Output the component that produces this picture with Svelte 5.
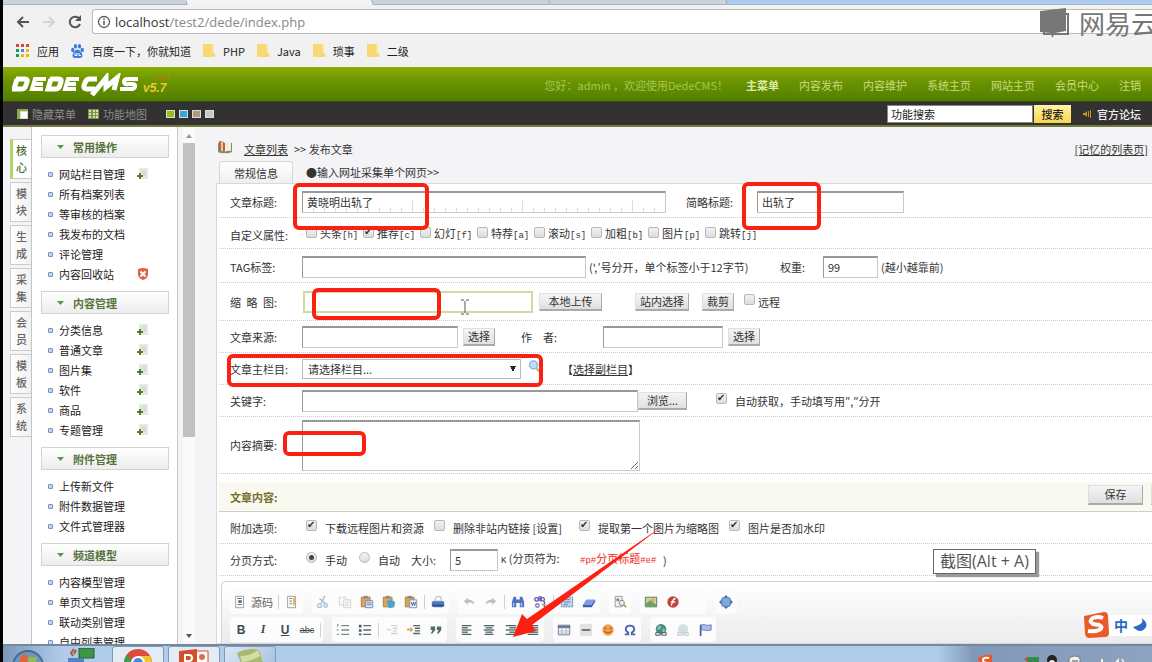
<script>
  const bookmarks = ['PHP', 'Java', '琐事', '二级'];
  const nav = ['主菜单', '内容发布', '内容维护', '系统主页', '网站主页', '会员中心', '注销'];
  const modules = ['核心', '模块', '生成', '采集', '会员', '模板', '系统'];
  const menu = [
    { title: '常用操作', items: [['网站栏目管理', 'add'], ['所有档案列表'], ['等审核的档案'], ['我发布的文档'], ['评论管理'], ['内容回收站', 'del']] },
    { title: '内容管理', items: [['分类信息', 'add'], ['普通文章', 'add'], ['图片集', 'add'], ['软件', 'add'], ['商品', 'add'], ['专题管理', 'add']] },
    { title: '附件管理', items: [['上传新文件'], ['附件数据管理'], ['文件式管理器']] },
    { title: '频道模型', items: [['内容模型管理'], ['单页文档管理'], ['联动类别管理'], ['自由列表管理']] }
  ];
  const flags = [['头条', 'h', false], ['推荐', 'c', true], ['幻灯', 'f', false], ['特荐', 'a', false], ['滚动', 's', false], ['加粗', 'b', false], ['图片', 'p', false], ['跳转', 'j', false]];

  const doc = '<path d="M3 1.500h9v13H3z" fill="#fff" stroke="#8d989c"/>';
  const clip = '<path d="M1.500 2.500h10v11h-10z" fill="#dda552" stroke="#a8763a"/><path d="M4 1h5v3H4z" fill="#8b8b8b"/>';
  const lines = (a) => a.map(([x, w], i) => `<path d="M${x} ${3 + i * 2.5}h${w}" stroke="#4d6468" stroke-width="1.500"/>`).join('');
  const icons = {
    source: doc + '<path d="M5 4h5M5 11h5" stroke="#555"/><path d="M6 6h4v3H6z" fill="#3f6b74"/>',
    preview: doc + '<path d="M5 4h3M5 7h3M5 10h3" stroke="#667"/><path d="M9 3h3v9H9z" fill="#e0b868"/>',
    cut: '<path d="M10 1L6 10M4 4l7 6" stroke="#a9bccb" stroke-width="1.500" fill="none"/><circle cx="4" cy="12" r="2.200" fill="none" stroke="#a5c1e0" stroke-width="1.500"/><circle cx="11" cy="12" r="2" fill="none" stroke="#a5c1e0" stroke-width="1.500"/>',
    copy: '<g fill="#fafafa" stroke="#ccd0d2"><path d="M1.500 2.500h7v9h-7z"/><path d="M6.500 5.500h8v9h-8z"/></g><path d="M8 8h5M8 10h5M8 12h5" stroke="#d5d8da"/>',
    paste: clip + '<path d="M6.500 6.500h8v8h-8z" fill="#d7e1fb" stroke="#6d82bd"/><path d="M8 9h5M8 11h5" stroke="#6b7fc0"/>',
    pasteText: clip + '<path d="M5 7l5-2 5 3-1 6-6 1z" fill="#4fa3cc"/>',
    pasteWord: clip + '<path d="M6.500 5.500h8v9h-8z" fill="#eef2fb" stroke="#7d8db5"/><path d="M8 8l1.500 4L11 8l1 4 1.500-4" stroke="#3f5790" fill="none"/>',
    print: '<path d="M4 7l2-5h5l1 5z" fill="#fff" stroke="#9aa7bb"/><path d="M1 7h14v5l-2 2H3l-2-2z" fill="#5078b8"/><path d="M1 11h14v2H1z" fill="#2d4f8d"/>',
    undo: '<path d="M2 7l5-4v2.500c5 0 7 2 7 6-2-3-4-3-7-3V11z" fill="#bcbfc2"/>',
    redo: '<path d="M14 7L9 3v2.500c-5 0-7 2-7 6 2-3 4-3 7-3V11z" fill="#bcbfc2"/>',
    find: '<path d="M3 2h3v3h4V2h3l2 6v6h-5V9H6v5H1V8z" fill="#5273c4"/><path d="M3 9v4M12 9v4" stroke="#b3c4ef" stroke-width="1.500"/>',
    replace: '<circle cx="4" cy="5" r="2" fill="none" stroke="#5a54b5" stroke-width="1.500"/><path d="M7 1v6M9 1v6M13 7v7" stroke="#5a54b5" stroke-width="1.500"/><circle cx="11" cy="5" r="2" fill="none" stroke="#5a54b5" stroke-width="1.500"/><circle cx="5" cy="12" r="2" fill="none" stroke="#7d78c8" stroke-width="1.500"/><path d="M10 11h5" stroke="#d4a060" stroke-width="2"/>',
    selectAll: '<path d="M1.500 2.500h13v11h-13z" fill="#bcd6ef" stroke="#4b7596" stroke-dasharray="2 1"/><path d="M4 5h7M4 8h8M4 11h5" stroke="#597d9c"/>',
    eraser: '<path d="M5 5h10l-4 6H1z" fill="#7e9be8"/><path d="M1 11h10l4-6v3l-4 6H1z" fill="#3e5cae"/>',
    find2: '<path d="M2.500 1.500h8v12h-8z" fill="#f2f2f0" stroke="#8b9494"/><path d="M4 4h3v3H4z" fill="#6f8784"/><circle cx="10" cy="9" r="3" fill="#e6eef0" stroke="#727d7f"/><path d="M12 11l3 3" stroke="#c79144" stroke-width="2"/>',
    image: '<path d="M1.500 2.500h13v11h-13z" fill="#c6d598" stroke="#5d6b55"/><path d="M2 10l5-4 7 5v2H2z" fill="#6f9f68"/><circle cx="10" cy="6" r="2" fill="#e2a850"/>',
    flash: '<circle cx="8" cy="8" r="6.500" fill="#c1443a"/><path d="M11 4c-4 0-3 4-5 8M5.500 8h5" stroke="#fff" stroke-width="1.500" fill="none"/>',
    maximize: '<path d="M8 0l3 3H5zM8 16l3-3H5zM0 8l3-3v6zM16 8l-3-3v6z" fill="#5c7386"/><rect x="3" y="3" width="10" height="10" rx="2" fill="#79a8e4" stroke="#4672ae"/>',
    ol: '<path d="M2 1v3M1 8h2M1 13h2" stroke="#4d5b60"/><path d="M6 3h9M6 8h9M6 13h9" stroke="#7c898d" stroke-width="1.500"/>',
    ul: '<path d="M1 2h3v3H1zM1 7h3v3H1zM1 12h3v2H1z" fill="#41636a"/><path d="M6 3h9M6 8h9M6 13h9" stroke="#5c6c70" stroke-width="1.500"/>',
    outdent: '<path d="M7 3h7M9 6h5M9 9h5M7 12h7M2 7.500h5" stroke="#cfd2d3" stroke-width="1.500"/>',
    indent: '<path d="M7 3h8M9 6h6M9 9h6M7 12h8" stroke="#57686b" stroke-width="1.500"/><path d="M0 7.500h4" stroke="#d99c49" stroke-width="2"/><path d="M4 4l3 3.500L4 11z" fill="#d99c49"/>',
    quote: '<path d="M2 4h5v4l-3 4H2l2-4H2zM9 4h5v4l-3 4H9l2-4H9z" fill="#52686c"/>',
    left: lines([[2, 11], [2, 7], [2, 11], [2, 7], [2, 11]]),
    center: lines([[2, 12], [4, 8], [2, 12], [4, 8], [3, 10]]),
    right: lines([[2, 12], [6, 8], [2, 12], [6, 8], [2, 12]]),
    justify: lines([[2, 12], [2, 12], [2, 12], [2, 12], [2, 12]]),
    table: '<path d="M1.500 2.500h13v11h-13z" fill="#fff" stroke="#5a6880"/><path d="M1 3h14v3H1z" fill="#6677a0"/><path d="M1 9h14M1 11.500h14M5.500 5v8M10.500 5v8" stroke="#a9b3c6"/>',
    hr: '<path d="M1 1h14v14H1z" fill="#e2e2e2"/><path d="M3 8h10" stroke="#444" stroke-width="1.500"/>',
    smile: '<circle cx="8" cy="8" r="6.500" fill="#f0a04a"/><path d="M4 6h2M10 6h2M4 9c1 3 7 3 8 0" stroke="#b05a20" stroke-width="1.500" fill="none"/>',
    omega: '<path d="M2 13h4v-2C1 8 3 3 8 3s7 5 2 8v2h4" fill="none" stroke="#4560b4" stroke-width="2"/>',
    link: '<circle cx="8" cy="7" r="6" fill="#3f8793"/><path d="M5 3l4 1-2 3-4 1zM10 6l3 1-2 4-2-2z" fill="#8fc487"/><path d="M2 11h5v3H2zM9 11h5v3H9z" fill="#e5e8ec" stroke="#43505c"/>',
    unlink: '<circle cx="8" cy="7" r="6" fill="#d3e1e2"/><path d="M2 11h5v3H2zM9 11h5v3H9z" fill="#f2f3f4" stroke="#b9c2c8"/>',
    flag: '<path d="M3 2v13" stroke="#48659f" stroke-width="2"/><path d="M4 2c4-1 6 2 11 0v6c-5 2-7-1-11 0z" fill="#a9c0ee" stroke="#5a76b8"/>'
  };
  const toolRows = [
    [
      ['source', '|', 'preview'],
      ['cut', 'copy', 'paste', 'pasteText', 'pasteWord', '|', 'print'],
      ['undo', 'redo', '|', 'find', 'replace', '|', 'selectAll', 'eraser'],
      ['find2'],
      ['image', 'flash', ''],
      ['maximize']
    ],
    [
      ['B', 'I', 'U', 'abc', '|'],
      ['ol', 'ul', '|', 'outdent', 'indent', 'quote'],
      ['left', 'center', 'right', 'justify'],
      ['table', 'hr', 'smile', 'omega'],
      ['link', 'unlink', 'flag']
    ]
  ];
</script>

<div class="screen">
  <div class="tabstrip"><i class="tab one"></i><i class="tab active"></i><i class="tab two"></i><i class="tab three"></i></div>

  <div class="toolbar">
    <button class="plain" aria-label="后退"><svg width="14" height="12" viewBox="0 0 14 12"><path d="M13 6H2M7 1L2 6l5 5" fill="none" stroke="#555" stroke-width="2" /></svg></button>
    <button class="plain" aria-label="前进"><svg width="14" height="12" viewBox="0 0 14 12"><path d="M1 6h11M7 1l5 5-5 5" fill="none" stroke="#d3d3d3" stroke-width="2" /></svg></button>
    <button class="plain" aria-label="刷新"><svg width="14" height="14" viewBox="0 0 14 14"><path d="M11.500 4A5.300 5.300 0 1 0 12 9" fill="none" stroke="#555" stroke-width="2" /><path d="M13 0v6H7z" fill="#555" /></svg></button>
    <div class="address">
      <svg width="14" height="14" viewBox="0 0 14 14"><circle cx="7" cy="7" r="5.500" fill="none" stroke="#555" stroke-width="1.300" /><path d="M7 6v4M7 3.500v1.500" stroke="#555" stroke-width="1.500" /></svg>
      <span><b>localhost</b>/test2/dede/index.php</span>
    </div>
  </div>

  <nav class="bookmarks">
    <a href="#apps"><svg width="13" height="13" viewBox="0 0 13 13"><g fill="#db4437"><path d="M0 0h3v3H0zM5 0h3v3H5zM10 0h3v3h-3z" /></g><path d="M0 5h3v3H0z" fill="#0f9d58" /><path d="M5 5h3v3H5z" fill="#4285f4" /><path d="M10 5h3v3h-3zM5 10h3v3H5zM10 10h3v3h-3z" fill="#f4b400" /><path d="M0 10h3v3H0z" fill="#0f9d58" /></svg>应用</a>
    <a href="#baidu"><svg width="13" height="14" viewBox="0 0 13 14"><g fill="#3a7be0"><ellipse cx="1.800" cy="6" rx="1.700" ry="2.200" /><ellipse cx="4.500" cy="2.300" rx="1.600" ry="2.200" /><ellipse cx="8.500" cy="2.300" rx="1.600" ry="2.200" /><ellipse cx="11.200" cy="6" rx="1.700" ry="2.200" /><path d="M6.500 5.500c2 0 5 4 5 6 0 3-3 2.500-5 2.200-2 .3-5 .8-5-2.200 0-2 3-6 5-6z" /></g><path d="M4 9v2.500h2V9M8 9v2.500h2" stroke="#fff" fill="none" /></svg>百度一下，你就知道</a>
    {#each bookmarks as b}
      <a href="#{b}"><svg width="12" height="13" viewBox="0 0 12 13"><path d="M0 1h9v8h3v4H0z" fill="#f8d775" /><path d="M0 0h10v11H0zM9 10h3v3H9z" fill="#f8d775" /><path d="M9 1h2v8H9z" fill="#fbe59c" /></svg>{b}</a>
    {/each}
  </nav>

  <header>
    <svg class="logo" width="160" height="24" viewBox="0 0 160 24" role="img" aria-label="DEDECMS v5.7">
      <g fill="none" stroke="#fff" stroke-width="5">
        <path d="M4 6h9q3 0 2 3l-1 3q-1 4-4 4H2L5 6" /><path d="M34 6H23l-3 10h11M21 11h10" stroke-width="4" /><path d="M38 6h9q3 0 2 3l-1 3q-1 4-4 4h-8l3-10" /><path d="M67 6H56l-3 10h11M54 11h10" stroke-width="4" />
        <path d="M85 6h-7q-4 0-5 4l-1 2q-1 4 3 4h8" /><path d="M80 22L94 5v9L105 5l-3 12" /><path d="M126 6h-10q-4 0-4 3t4 2h4q4 0 3 3-1 2-4 2h-11" stroke-width="4" />
      </g>
      <text x="131" y="19" class="ver">v5.7</text><text x="145" y="7" class="sp">sp1</text>
    </svg>
    <span class="hello">您好：admin ，欢迎使用DedeCMS！</span>
    <nav>{#each nav as n, i}<a href="#{n}" class:current={i === 0}>{n}</a>{/each}</nav>
  </header>

  <div class="subbar">
    <a href="#hide"><svg width="11" height="10" viewBox="0 0 11 10"><path d="M0 0h11v10H0z" fill="#d7e2c0" /><path d="M0 0h11v2H0zM0 2h3v8H0z" fill="#89a956" /><path d="M4 3h6v6H4z" fill="#fff" /></svg>隐藏菜单</a>
    <a href="#map"><svg width="11" height="10" viewBox="0 0 11 10"><path d="M0 0h11v10H0z" fill="#7b9448" /><path d="M1 1h2v2H1zM5 1h2v2H5zM8 1h2v2H8zM1 4h2v2H1zM5 4h2v2H5zM8 4h2v2H8zM1 7h2v2H1zM5 7h2v2H5zM8 7h2v2H8z" fill="#d5e2ad" /></svg>功能地图</a>
    <div class="skins"><button aria-label="绿色" class="green"></button><button aria-label="蓝色" class="blue"></button><button aria-label="棕色" class="brown"></button><button aria-label="银色" class="silver"></button></div>
    <form onsubmit={(e) => e.preventDefault()}><input aria-label="功能搜索" value="功能搜索" /><button>搜索</button></form>
    <a class="forum" href="#forum"><svg width="8" height="8" viewBox="0 0 8 8"><path d="M0 3h2l2-2v6L2 5H0zM5 1h1v6H5zM7 0h1v8H7z" fill="#c9980e" /></svg>官方论坛</a>
  </div>

  <main>
    <nav class="modules">{#each modules as m, i}<a href="#{m}" class:on={i === 0}>{m}</a>{/each}</nav>
    <aside>
      {#each menu as g}
        <section>
          <h2><svg width="7" height="4" viewBox="0 0 7 4"><path d="M0 0h7L3.500 4z" fill="#57964a" /></svg>{g.title}</h2>
          <ul>
            {#each g.items as [name, act]}
              <li>
                <i></i><a href="#{name}">{name}</a>
                {#if act === 'add'}
                  <button class="plain" aria-label="添加{name}"><svg width="12" height="12" viewBox="0 0 12 12"><path d="M2 0h9v11H2z" fill="#e3ebe1" /><path d="M5 3h4M5 5h4M6 7h3" stroke="#c5d2c3" /><path d="M3 5v6M0 8h6" stroke="#557d2d" stroke-width="2" /></svg></button>
                {:else if act === 'del'}
                  <button class="plain" aria-label="清空{name}"><svg width="12" height="12" viewBox="0 0 12 12"><path d="M1 1q5-2 10 0v6q-1 4-5 5-4-1-5-5z" fill="#dc6248" /><path d="M3.500 3.500l5 5M8.500 3.500l-5 5" stroke="#fff" stroke-width="2" /></svg></button>
                {/if}
              </li>
            {/each}
          </ul>
        </section>
      {/each}
    </aside>
    <div class="scroll"><b class="up"></b><i></i><b class="down"></b></div>

    <div class="content">
      <div class="crumb">
        <svg width="14" height="13" viewBox="0 0 14 13"><path d="M0 2v9q4 2 7 1 3 1 7-1V2q-3-1-7 1-4-2-7-1z" fill="#7b9560" /><path d="M1 0q4 0 6 2v9q-2-2-6-1z" fill="#c2604a" /><path d="M7 2q2-2 6-2v10q-4-1-6 1z" fill="#f3efe0" /><path d="M3 1h2v9H3z" fill="#e7c3a8" /></svg>
        <a href="#list">文章列表</a><span>&gt;&gt; 发布文章</span><a class="memo" href="#memo">[记忆的列表页]</a>
      </div>
      <div class="tabs"><button>常规信息</button><a href="#collect">●输入网址采集单个网页&gt;&gt;</a></div>

      <form class="panel" onsubmit={(e) => e.preventDefault()}>
        <div class="row r-title"><label for="title">文章标题:</label><input id="title" class="ruler" value="黄晓明出轨了" /><label class="inset" for="short">简略标题:</label><input id="short" value="出轨了" /></div>
        <div class="row r-flags"><span>自定义属性:</span>{#each flags as [t, k, on]}<label class="flag"><input type="checkbox" checked={on} /><span>{t}<code>[{k}]</code></span></label>{/each}</div>
        <div class="row r-tag"><label for="tag">TAG标签:</label><input id="tag" /><span class="hint">(',′号分开，单个标签小于12字节)</span><label for="weight">权重:</label><input id="weight" value="99" /><span class="hint">(越小越靠前)</span></div>
        <div class="row r-thumb"><label for="thumb">缩&ensp;略&ensp;图:</label><input id="thumb" class="focus" /><button>本地上传</button><button>站内选择</button><button>裁剪</button><label class="flag"><input type="checkbox" />远程</label></div>
        <div class="row r-source"><label for="source">文章来源:</label><input id="source" /><button>选择</button><label for="author">作&emsp;者:</label><input id="author" /><button>选择</button></div>
        <div class="row r-cat"><label for="cat">文章主栏目:</label><select id="cat"><option>请选择栏目...</option></select>
          <svg width="13" height="13" viewBox="0 0 13 13"><circle cx="5.500" cy="5" r="4" fill="#bfdff6" stroke="#8ab7dc" stroke-width="1.500" /><path d="M8.500 8.500l4 4" stroke="#d2a173" stroke-width="2" /></svg><span class="strong">【<a href="#sub">选择副栏目</a>】</span></div>
        <div class="row r-key"><label for="key">关键字:</label><input id="key" /><button>浏览...</button><label class="wide"><input type="checkbox" checked />自动获取，手动填写用″,″分开</label></div>
        <div class="row r-abs"><label for="abs">内容摘要:</label><textarea id="abs"></textarea></div>
        <div class="bar"><strong>文章内容:</strong><button>保存</button><button aria-label="取消"></button></div>
        <div class="row r-opt"><span>附加选项:</span><label class="wide"><input type="checkbox" checked />下载远程图片和资源</label><label class="wide"><input type="checkbox" />删除非站内链接 [设置]</label><label class="wide"><input type="checkbox" checked />提取第一个图片为缩略图</label><label class="wide"><input type="checkbox" checked />图片是否加水印</label></div>
        <div class="row r-page"><span>分页方式:</span><label class="wide"><input type="radio" name="page" checked />手动</label><label class="wide"><input type="radio" name="page" />自动</label><label for="size">大小:</label><input id="size" value="5" /><span class="hint"><code>K</code> (分页符为:</span><span class="mark"><code>#p#</code>分页标题<code>#e#</code></span><span>)</span></div>

        <div class="editor">
          {#each toolRows as r}
            <div class="tools">
              {#each r as g}
                <div class="group">
                  {#each g as t}
                    {#if t === '|'}<i></i>
                    {:else if t === ''}<span class="blank"></span>
                    {:else if icons[t]}
                      <button class="plain tool" class:src={t === 'source'} aria-label={t}><svg width="14" height="14" viewBox="0 0 16 16">{@html icons[t]}</svg>{#if t === 'source'}<span>源码</span>{/if}</button>
                    {:else}<button class="plain tool t-{t}">{t}</button>{/if}
                  {/each}
                </div>
              {/each}
            </div>
          {/each}
        </div>
      </form>
    </div>
  </main>

  <footer>
    <span class="orb"><svg width="34" height="17" viewBox="0 0 34 17"><circle cx="17" cy="19" r="16" fill="#426a94" /><circle cx="17" cy="19" r="14" fill="#6f96bb" /><path d="M10 9q4-3 7 0l-1 8H8z" fill="#e46438" /><path d="M18 9q4 3 8 0l-1 8h-8z" fill="#93bd4a" /></svg></span>
    <span class="task bare"><svg width="28" height="15" viewBox="0 0 28 15"><path d="M11 0h15v10H11z" fill="#3b9648" stroke="#285b34" /><path d="M0 10h16v5H0z" fill="#4e84c4" /><path d="M6 1l-3 4 2 3M8 2l-2 4" stroke="#a45a35" stroke-width="2" fill="none" /></svg></span>
    <span class="task light"><svg width="28" height="15" viewBox="0 0 28 15"><circle cx="14" cy="14" r="14" fill="#dd4b3e" /><path d="M0 14q0-5 3-8l8 9H0z" fill="#35a253" /><path d="M14 7h12q2 4 2 8H14z" fill="#f2c52d" /><circle cx="14" cy="14" r="7" fill="#fff" /><circle cx="14" cy="14" r="5" fill="#4a87e8" /></svg></span>
    <span class="task light"><svg width="30" height="15" viewBox="0 0 30 15"><path d="M14 2h15v13H14z" fill="#fff" stroke="#d3502c" /><path d="M0 2l18-2v15H0z" fill="#d3502c" /><path d="M6 15V6h4q3 0 3 3t-3 3H7" fill="none" stroke="#fff" stroke-width="2" /><circle cx="23" cy="8" r="3" fill="#e06d48" /></svg></span>
    <span class="task"><svg width="28" height="14" viewBox="0 0 28 14"><path d="M1 4q12-6 22-3l4 13H5z" fill="#a9b873" /><path d="M4 7q10 0 18-6l2 6q-8 5-18 6z" fill="#d5dda6" /></svg></span>
    <span class="tray"><svg width="170" height="14" viewBox="0 0 170 14"><path d="M3 4q7-5 14-3v13H5z" fill="#e65b2b" /><path d="M14 4q-6-1-6 2t6 3q3 2-1 4" stroke="#fff" stroke-width="2" fill="none" /><path d="M52 3h12v9H52z" fill="#318b4a" /><path d="M49 5l4-2v6z" fill="#a36037" /><circle cx="77" cy="6" r="5" fill="#222" /><circle cx="77" cy="9" r="3" fill="#f2f2f2" /><path d="M94 4q6-4 11 0v10H94z" fill="#eceef0" stroke="#777" /><path d="M97 7h6M98 10h4" stroke="#555" /><path d="M118 13h2v-2h-2zM122 13h2V9h-2zM126 13h2V5h-2zM137 8h3l4-4v10h-7z" fill="#f1f4f7" /><path d="M147 5q3 4 0 8" stroke="#f1f4f7" fill="none" stroke-width="1.500" /></svg></span>
  </footer>

  <div class="watermark"><svg width="30" height="30" viewBox="0 0 30 30"><path d="M4 6h24v20H4z" fill="none" stroke="#777" stroke-width="2" /><path d="M0 3l26-3v23l-11 2-3 5-1-5-11-1z" fill="#777" /></svg><span>网易云</span></div>
  <div class="tip">截图(Alt + A)</div>
  <div class="ime"><svg width="26" height="26" viewBox="0 0 26 26"><path d="M1 4l20-4q4 0 4 4l1 17q0 4-4 4L6 26q-3 0-4-4z" fill="#ea5a28" /><path d="M20 6q-5-2-10 0-5 3 0 6l6 1q5 2 0 5-4 2-11 1" fill="none" stroke="#fff" stroke-width="4" /></svg><b>中</b><svg width="14" height="14" viewBox="0 0 14 14"><path d="M8 0q5 6-8 9 8 8 13 0 2-5-5-9z" fill="#2a6cc4" /></svg></div>
  <svg class="marks" width="1152" height="662" viewBox="0 0 1152 662">
    <g fill="none" stroke="#fb2112" stroke-width="4">
      <rect x="295" y="185" width="132" height="43" rx="4" /><rect x="744" y="184" width="75" height="44" rx="4" /><rect x="314" y="290" width="125" height="28" rx="4" /><rect x="229" y="356" width="312" height="29" rx="4" /><rect x="285" y="433" width="79" height="21" rx="4" />
    </g>
    <path d="M664 525L532 625l4 6-23 6 9-23 5 5z" fill="#fb2112" />
    <path d="M461 300h3m2 0h3M465 301v12M461 314h3m2 0h3" stroke="#555" fill="none" />
  </svg>
</div>

<style>
  :global(body) { margin: 0; background: #f4f3f5; }
  .screen { position: relative; display: flex; flex-direction: column; height: 100vh; overflow: hidden; box-sizing: border-box; border-left: 3px solid #000; color: #333; font: 11px/16px "Noto Sans CJK SC", sans-serif; white-space: nowrap; }
  .screen :global(*) { box-sizing: border-box; }
  svg { display: block; flex: none; }
  a { color: inherit; text-decoration: none; }
  button, input, select, textarea { font: inherit; color: inherit; margin: 0; border-radius: 0; }
  button { padding: 0; }
  .plain { border: 0; background: none; display: flex; align-items: center; justify-content: center; }
  code { font: 9px/16px "Liberation Mono", monospace; }

  .tabstrip { display: flex; flex: none; height: 5px; background: #accbf0; border-bottom: 1px solid #a9b2bf; }
  .tab { background: #ccd2da; border-right: 1px solid #99a3b1; transform: skewX(20deg); flex: none; }
  .one { width: 184px; transform: none; }
  .active { width: 186px; background: #f3f3f4; height: 5px; }
  .two { width: 177px; }
  .three { width: 177px; }
  .toolbar { display: flex; flex: none; align-items: center; gap: 12px; height: 33px; padding-left: 13px; background: #f1f1f2; }
  .address { flex: 1; display: flex; align-items: center; gap: 4px; height: 25px; padding-left: 4px; margin-left: -2px; background: #fff; border: 1px solid #bcbcbc; border-right: 0; border-radius: 3px 0 0 3px; color: #888; font: 13px/20px "Open Sans", sans-serif; }
  .address b { font-weight: 400; color: #333; }
  .bookmarks { display: flex; flex: none; align-items: center; gap: 12px; height: 29px; padding: 0 0 4px 13px; background: #f1f1f2; color: #222; }
  .bookmarks a { display: flex; align-items: center; gap: 8px; }

  header { display: flex; flex: none; align-items: center; height: 35px; padding: 2px 11px 0 9px; background: linear-gradient(#8bae00, #6c9500 40%, #527e00); color: #a5c650; border-bottom: 1px solid #35500a; }
  .ver { font: italic bold 12px "Liberation Sans", sans-serif; fill: #e5c933; }
  .sp { font: italic 8px "Liberation Sans", sans-serif; fill: #c07a10; }
  .hello { margin-left: auto; }
  header nav { display: flex; gap: 20px; margin-left: 18px; color: #c4dc80; }
  .current { font-weight: 700; color: #dcebaa; }
  .subbar { display: flex; flex: none; align-items: center; gap: 12px; height: 25px; padding: 0 11px 0 14px; background: #343132; border-bottom: 2px solid #747a3c; color: #8d8d8d; }
  .subbar a { display: flex; align-items: center; gap: 4px; }
  .skins { display: flex; gap: 4px; margin-left: 7px; }
  .skins button { width: 9px; height: 8px; border: 1px solid #ddd; }
  .green { background: #94bd18; } .blue { background: #3aa5dc; } .brown { background: #b09a76; } .silver { background: #c5c6d0; }
  .subbar form { display: flex; gap: 1px; margin-left: auto; color: #222; }
  .subbar input { width: 146px; height: 18px; padding: 0 3px; border: 1px solid #888; background: #fff; }
  .subbar form button { width: 37px; height: 18px; border: 0; background: linear-gradient(#fff3a8, #fbd64a); font-weight: 500; line-height: 16px; }
  .subbar .forum { gap: 6px; color: #eee; font-weight: 500; }

  main { display: flex; flex: 1; min-height: 0; background: #f4f3f5; }
  .modules { flex: none; width: 29px; padding: 12px 0 0 7px; border-right: 1px solid #c5c5c5; display: flex; flex-direction: column; gap: 3px; }
  .modules a { height: 40px; flex: none; padding: 2px 5px 0; border: 1px solid #ccc; border-right: 0; background: linear-gradient(90deg, #fff, #f1f1f1); white-space: normal; word-break: break-all; color: #666; font-weight: 500; line-height: 17px; }
  .modules .on { border-left: 3px solid #b3d465; padding-left: 3px; color: #4b6b31; background: #fff; }
  aside { flex: none; width: 146px; padding: 8px 8px 0 9px; background: #fff; border-right: 1px solid #c9c9c9; overflow: hidden; }
  section { padding-bottom: 7px; }
  h2 { display: flex; align-items: center; gap: 9px; height: 23px; margin: 0; padding-left: 15px; border: 1px solid #d3d3d3; background: linear-gradient(#fff, #ededed); color: #57743e; font-size: 11px; line-height: 16px; font-weight: 700; }
  ul { list-style: none; margin: 0; padding: 6px 20px 0 7px; }
  li { display: flex; align-items: center; height: 20px; gap: 6px; color: #222; }
  li i { width: 5px; height: 5px; border: 1px solid #7492c2; border-radius: 1px; background: #c6d7f2; }
  li button { margin-left: auto; }
  .scroll { flex: none; display: flex; flex-direction: column; align-items: center; width: 12px; margin-left: 5px; padding: 7px 0 6px; background: #fafafa; }
  .scroll i { width: 12px; height: 294px; margin-top: 5px; background: #c1c1c1; }
  .up, .down { border: 3px solid transparent; border-top: 0; border-bottom: 4px solid #999; }
  .down { margin-top: auto; border-bottom: 0; border-top: 4px solid #555; }

  .content { flex: 1; min-width: 0; padding-left: 21px; display: flex; flex-direction: column; overflow: hidden; }
  .crumb { display: flex; align-items: center; height: 34px; padding: 10px 4px 0 2px; flex: none; gap: 6px; }
  .crumb > a { text-decoration: underline; }
  .crumb svg { margin-right: 6px; margin-bottom: 4px; }
  .crumb .memo { margin-left: auto; }
  .tabs { display: flex; flex: none; align-items: center; gap: 13px; height: 22px; padding-left: 3px; }
  .tabs button { width: 74px; height: 22px; border: 1px solid #d5d5d5; border-bottom: 0; border-radius: 3px 3px 0 0; background: linear-gradient(#fff, #f0f0f0); }
  .panel { flex: 1; display: flex; flex-direction: column; border: 1px solid #d9d9d9; border-right: 0; background: #fff; overflow: hidden; padding-left: 2px; }
  .row { display: grid; flex: none; align-items: center; padding-left: 11px; border-bottom: 1px dotted #ccc; justify-content: start; }
  .row > input, textarea { width: 100%; height: 22px; padding: 0 4px; border: 1px solid #c9c9c9; border-top: 2px solid #999; border-left-color: #999; background: #fff; outline: 0; }
  .row > button, .bar button { height: 18px; border: 1px solid #e0e0e0; border-right-color: #aaa; border-bottom: 2px solid #aaa; background: linear-gradient(#f5f5f5, #dfdfdf); line-height: 14px; }
  .inset { padding-left: 20px; }
  .r-title { grid-template-columns: 72px 364px 91px 147px; height: 34px; padding-top: 2px; }
  .row > .ruler { background: repeating-linear-gradient(90deg, transparent 0 10px, #ddd 10px 11px) 0 100% / 100% 4px no-repeat, repeating-linear-gradient(90deg, transparent 0 109px, #ddd 109px 110px) 0 100% / 100% 12px no-repeat, #fff; }
  .r-flags { grid-template-columns: 76px repeat(8, 57px); height: 31px; padding-top: 3px; }
  .flag { display: flex; align-items: center; gap: 3px; }
  .wide { display: flex; align-items: center; gap: 8px; }
  .r-tag { grid-template-columns: 72px 284px 194px 43px 55px auto; height: 34px; padding-top: 2px; }
  .hint { padding-left: 3px; }
  .r-thumb { grid-template-columns: 73px 236px 96px 67px 42px auto; height: 38px; }
  .row > .focus { width: 230px; border: 2px solid #d0dba4; }
  .r-thumb button:nth-of-type(1) { width: 63px; }
  .r-thumb button:nth-of-type(2) { width: 54px; }
  .r-thumb button:nth-of-type(3) { width: 32px; }
  .r-source { grid-template-columns: 72px 161px 58px 82px 125px 33px; height: 32px; }
  .r-source > input { width: calc(100% - 5px); }
  .r-source > button { width: 32px; }
  .r-cat { grid-template-columns: 72px 226px 34px auto; height: 32px; }
  .r-cat > svg { margin-bottom: 5px; }
  select { appearance: none; width: 219px; height: 20px; padding: 0 5px; border: 1px solid #bbb; background: linear-gradient(to bottom right, #222 50%, transparent 50%) right 4px center / 3px 6px no-repeat, linear-gradient(to bottom left, #222 50%, transparent 50%) right 7px center / 3px 6px no-repeat, #fff; }
  .strong a { text-decoration: underline; }
  .r-key { grid-template-columns: 72px 336px 78px auto; height: 32px; }
  .r-key > button { width: 49px; }
  .r-abs { grid-template-columns: 72px 338px; height: 57px; }
  .r-abs textarea { height: 51px; resize: both; }
  .bar { display: flex; flex: none; align-items: center; gap: 8px; height: 30px; margin-top: 8px; padding-left: 11px; background: #f9f9f0; border-bottom: 1px solid #ccc; overflow: hidden; }
  .bar strong { margin-right: auto; color: #74702c; }
  .bar button { width: 55px; height: 20px; margin-bottom: 4px; flex: none; }
  .bar button:last-child { margin-right: -54px; }
  .r-opt { grid-template-columns: 76px 128px 145px 150px auto; height: 32px; }
  .r-page { grid-template-columns: 76px 53px 52px 39px 48px 82px 83px auto; height: 32px; }
  .mark { color: #f02618; }
  input[type="checkbox"], input[type="radio"] { appearance: none; position: relative; flex: none; width: 11px; height: 11px; margin-bottom: 4px; border: 1px solid #b8b8b8; border-radius: 2px; background: linear-gradient(#f3f3f3, #dcdcdc); }
  input[type="radio"] { border-radius: 50%; }
  input[type="checkbox"]:checked::after { content: "✔"; position: absolute; left: 0; top: -2px; font: 10px/12px "DejaVu Sans", sans-serif; color: #333; }
  input[type="radio"]:checked::after { content: ""; position: absolute; left: 2px; top: 2px; width: 5px; height: 5px; border-radius: 50%; background: #444; }

  .editor { flex: 1; margin: 5px 0 0 2px; padding: 7px 0 0 8px; border: 1px solid #d3d3d3; border-right: 0; border-radius: 5px 0 0 0; background: linear-gradient(#fff, #ebebeb); }
  .tools { display: flex; gap: 9px; height: 28px; }
  .group { display: flex; align-items: center; height: 25px; background: #fcfcfc; border-radius: 4px; }
  .group i { width: 1px; height: 14px; margin: 0 2px; background: #d0d0d0; }
  .tool, .blank { width: 22px; height: 22px; color: #3d4b4f; }
  .src { width: 46px; gap: 4px; color: #666; }
  .t-B { font: bold 12px "Liberation Sans", sans-serif; }
  .t-I { font: italic bold 12px "Liberation Serif", serif; }
  .t-U { font: bold 12px "Liberation Sans", sans-serif; text-decoration: underline; }
  .t-abc { font: 9px "Liberation Sans", sans-serif; text-decoration: line-through; }

  footer { display: flex; flex: none; height: 18px; padding-left: 8px; border-top: 2px solid #75889d; background: linear-gradient(90deg, #7d97b8, #b0ccea 60px, #b0ccea 935px, #8199b9 970px, #8da3bf); overflow: hidden; }
  .orb { width: 45px; padding-top: 1px; }
  .task { display: flex; justify-content: center; width: 52px; height: 18px; padding-top: 2px; margin-right: 4px; border: 1px solid #7f99b7; border-radius: 3px 3px 0 0; background: linear-gradient(135deg, #dce8f4, #a9c3df); }
  .bare { border: 0; background: none; }
  .light { background: #e3ebf5; }
  .tray { margin-left: auto; margin-right: 7px; padding-top: 8px; }

  .watermark { position: absolute; left: 1037px; top: 8px; display: flex; gap: 9px; width: 120px; color: #777; }
  .watermark span { font-size: 26px; line-height: 30px; }
  .tip { position: absolute; left: 930px; top: 549px; height: 25px; padding: 0 6px; border: 1px solid #666; background: #fff; box-shadow: 3px 3px 1px #999; color: #555; font: 16px/23px "Open Sans", "Noto Sans CJK SC", sans-serif; }
  .ime { position: absolute; right: 0; top: 612px; display: flex; align-items: center; gap: 5px; width: 69px; padding-right: 3px; color: #2a6cc4; background: linear-gradient(#fff, #fff) 12px 3px / 100% 21px no-repeat; }
  .ime b { font-size: 14px; line-height: 20px; }
  .marks { position: absolute; left: -3px; top: 0; pointer-events: none; }
</style>
